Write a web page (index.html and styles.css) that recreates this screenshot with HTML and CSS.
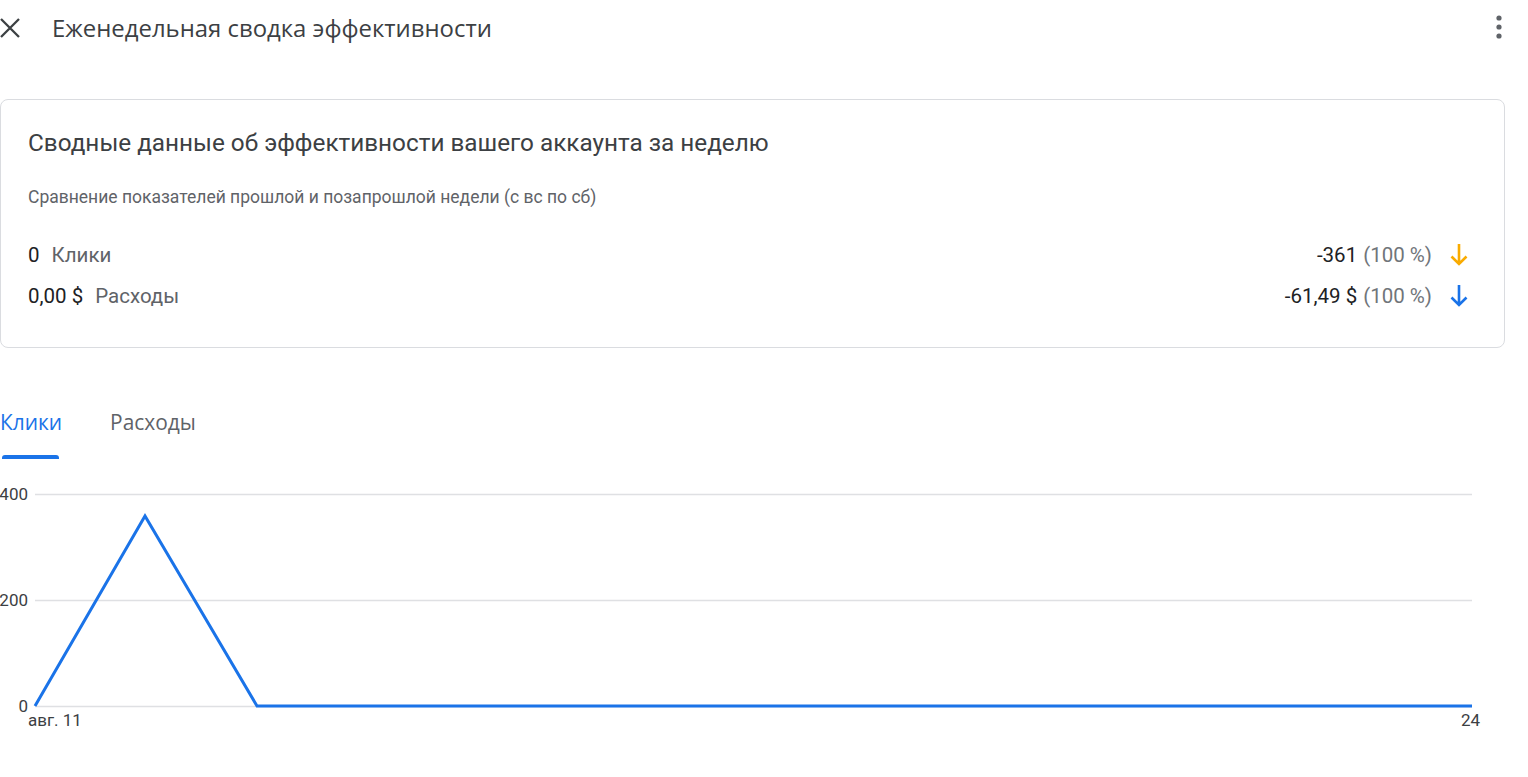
FILE: index.html
```html
<!DOCTYPE html>
<html lang="ru">
<head>
<meta charset="utf-8">
<link rel="stylesheet" href="styles.css">
</head>
<body>
<div class="page">
  <header class="topbar">
    <svg class="close" width="22" height="22" viewBox="0 0 22 22"><path d="M2 2 L20 20 M20 2 L2 20" stroke="#3c4043" stroke-width="2.3" fill="none"/></svg>
    <h1 class="title">Еженедельная сводка эффективности</h1>
    <svg class="more" width="10" height="28" viewBox="0 0 10 28"><circle cx="5" cy="5" r="2.6" fill="#5f6368"/><circle cx="5" cy="14" r="2.6" fill="#5f6368"/><circle cx="5" cy="23" r="2.6" fill="#5f6368"/></svg>
  </header>

  <section class="card">
    <h2 class="card-title">Сводные данные об эффективности вашего аккаунта за неделю</h2>
    <p class="card-sub">Сравнение показателей прошлой и позапрошлой недели (с вс по сб)</p>
    <div class="metric">
      <div class="m-left"><span class="val">0</span><span class="name">Клики</span></div>
      <div class="m-right"><span class="val">-361</span><span class="pct">(100 %)</span>
        <svg class="arrow" width="18" height="24" viewBox="0 0 18 24"><path d="M9 1 V21 M1.5 13.5 L9 21 L16.5 13.5" stroke="#f9ab00" stroke-width="2.6" fill="none"/></svg>
      </div>
    </div>
    <div class="metric">
      <div class="m-left"><span class="val">0,00 $</span><span class="name">Расходы</span></div>
      <div class="m-right"><span class="val">-61,49 $</span><span class="pct">(100 %)</span>
        <svg class="arrow" width="18" height="24" viewBox="0 0 18 24"><path d="M9 1 V21 M1.5 13.5 L9 21 L16.5 13.5" stroke="#1a73e8" stroke-width="2.6" fill="none"/></svg>
      </div>
    </div>
  </section>

  <nav class="tabs">
    <div class="tab active">Клики</div>
    <div class="tab">Расходы</div>
  </nav>

  <div class="chart">
    <svg width="1500" height="290" viewBox="0 0 1500 290">
      <g class="grid">
        <line x1="35" y1="35.5" x2="1472" y2="35.5"/>
        <line x1="35" y1="141.5" x2="1472" y2="141.5"/>
        <line x1="35" y1="247.5" x2="1472" y2="247.5"/>
      </g>
      <g class="ylab">
        <text x="28" y="41" text-anchor="end">400</text>
        <text x="28" y="147" text-anchor="end">200</text>
        <text x="28" y="253" text-anchor="end">0</text>
      </g>
      <g class="xlab">
        <text x="28" y="267">авг. 11</text>
        <text x="1480" y="267" text-anchor="end">24</text>
      </g>
      <polyline class="line" points="35,247 145,57 257,247 1472,247"/>
    </svg>
  </div>
</div>
</body>
</html>
```

FILE: styles.css
```css
* { box-sizing: border-box; }
html, body { margin: 0; padding: 0; background: #fff; }
body { font-family: Roboto, "Noto Sans", Arial, sans-serif; color: #202124; }
.page { width: 1528px; }

.topbar {
  display: flex;
  align-items: center;
  height: 56px;
}
.close { margin-left: -1px; flex: none; }
.title {
  margin: 0 0 0 31px;
  font-family: "Open Sans", Roboto, sans-serif;
  font-size: 23.9px;
  font-weight: 500;
  color: #3c4043;
  flex: 1;
  line-height: 30px;
}
.more { margin-right: 24px; margin-top: -2px; flex: none; }

.card {
  margin-top: 43px;
  width: 1505px;
  border: 1px solid #dadce0;
  border-radius: 8px;
  padding: 26px 27px 30.5px 27px;
}
.card-title {
  margin: 0;
  font-size: 24.3px;
  font-weight: 400;
  color: #3c4043;
  line-height: 34px;
}
.card-sub {
  margin: 26px 0 26.5px;
  font-size: 17.5px;
  color: #5f6368;
  line-height: 22px;
}
.metric {
  display: flex;
  justify-content: space-between;
  align-items: center;
  height: 41px;
  font-size: 20.5px;
}
.m-left .val { color: #202124; margin-right: 12px; }
.m-left .name { color: #5f6368; }
.m-right { display: flex; align-items: center; }
.m-right .val { color: #202124; margin-right: 6px; }
.m-right .pct { color: #70757a; }
.arrow { margin-left: 18px; margin-right: 9px; }

.tabs {
  display: flex;
  margin-top: 49px;
  height: 62px;
}
.tab {
  font-family: "Open Sans", Roboto, sans-serif;
  font-size: 20.9px;
  font-weight: 500;
  line-height: 24px;
  color: #5f6368;
  padding-top: 13px;
  margin-right: 48px;
  position: relative;
}
.tab.active { color: #1a73e8; }
.tab.active::after {
  content: "";
  position: absolute;
  left: 2px;
  right: 3px;
  bottom: 0;
  height: 4px;
  background: #1a73e8;
  border-radius: 3px 3px 0 0;
}

.chart svg { display: block; }
.grid line { stroke: #dfe0e3; stroke-width: 1.5; }
.ylab text, .xlab text { font-family: Roboto, sans-serif; font-size: 17px; fill: #3c4043; }
.line { fill: none; stroke: #1a73e8; stroke-width: 3; stroke-linejoin: miter; }
```
